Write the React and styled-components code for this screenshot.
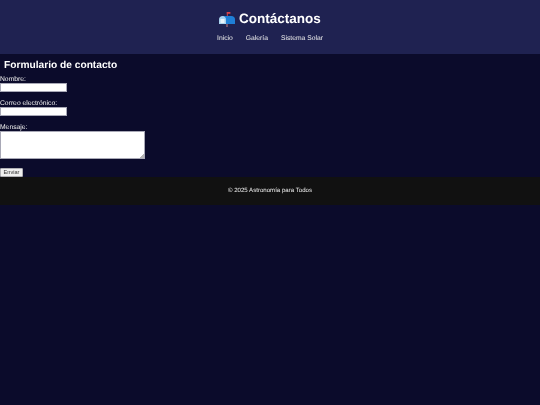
import React from 'react';
import styled, { createGlobalStyle } from 'styled-components';

const GlobalStyle = createGlobalStyle`
  html, body {
    margin: 0;
    padding: 0;
    min-height: 405px;
    background: #0b0b2b;
    color: #fff;
    font-family: "Liberation Sans", Arial, sans-serif;
    text-rendering: geometricPrecision;
  }
  #root {
    will-change: transform;
  }
`;

const Header = styled.header`
  height: 54px;
  box-sizing: border-box;
  padding-top: 9px;
  background: #1f2251;
  text-align: center;
`;

const Title = styled.h1`
  margin: 0;
  display: flex;
  justify-content: center;
  align-items: center;
  gap: 4px;
  font-size: 13.5px;
  line-height: 20px;
  font-weight: 700;
`;

const Nav = styled.nav`
  margin-top: 4px;
  display: flex;
  justify-content: center;
  gap: 13px;
`;

const NavLink = styled.a`
  color: #eee;
  font-size: 6.75px;
  line-height: 11px;
  text-decoration: none;
`;

const Main = styled.main`
  height: 123px;
  box-sizing: border-box;
  padding-top: 5px;
`;

const Heading = styled.h2`
  margin: 0 0 1px;
  padding-left: 4px;
  font-size: 10.2px;
  line-height: 14px;
  font-weight: 700;
`;

const Form = styled.form`
  display: flex;
  flex-direction: column;
  align-items: flex-start;
`;

const Label = styled.label`
  height: 9px;
  color: #eee;
  font-size: 6.75px;
  line-height: 11px;
`;

const Input = styled.input`
  display: block;
  width: 67px;
  height: 9px;
  box-sizing: border-box;
  margin-bottom: 6px;
  padding: 0;
  border: 1px solid #a8a8b6;
  background: #fff;
`;

const TextArea = styled.textarea`
  display: block;
  width: 145px;
  height: 28px;
  box-sizing: border-box;
  margin-bottom: 9px;
  padding: 0;
  border: 1px solid #a8a8b6;
  resize: none;
  background: linear-gradient(135deg, transparent 50%, #b5b5b5 50%) no-repeat right bottom / 4px 4px #fff;
`;

const Submit = styled.button`
  width: 23px;
  height: 9px;
  box-sizing: border-box;
  padding: 0;
  border: 1px solid #b0b0b4;
  border-radius: 1px;
  background: #efefef;
  color: #333;
  font-family: inherit;
  font-size: 5.6px;
  line-height: 7px;
`;

const Footer = styled.footer`
  height: 28px;
  background: #111;
  color: #eee;
  font-size: 6.1px;
  line-height: 27px;
  text-align: center;
`;

const MailboxIcon = () => (
  <svg width="16" height="15" viewBox="0 0 16 15" aria-hidden="true">
    <rect x="7.2" y="11" width="1.6" height="4" fill="#8a5a6a" />
    <rect x="7.8" y="0" width="1.1" height="6" fill="#c8404a" />
    <rect x="7.8" y="0" width="3.6" height="1.8" fill="#d8434a" />
    <path d="M4 4h8.5c2 0 3.5 1.5 3.5 3.5V12H4z" fill="#1f7fd6" />
    <path d="M0 7.5C0 5.5 1.6 4 3.5 4S7 5.5 7 7.5V12H0z" fill="#a9d3ef" />
    <rect x="1.5" y="7" width="4" height="4" fill="#e8f3fb" />
  </svg>
);

const App = () => (
  <>
    <GlobalStyle />
    <Header>
      <Title>
        <MailboxIcon />
        Contáctanos
      </Title>
      <Nav>
        <NavLink href="#">Inicio</NavLink>
        <NavLink href="#">Galería</NavLink>
        <NavLink href="#">Sistema Solar</NavLink>
      </Nav>
    </Header>
    <Main>
      <Heading>Formulario de contacto</Heading>
      <Form>
        <Label>Nombre:</Label>
        <Input type="text" />
        <Label>Correo electrónico:</Label>
        <Input type="email" />
        <Label>Mensaje:</Label>
        <TextArea />
        <Submit type="button">Enviar</Submit>
      </Form>
    </Main>
    <Footer>© 2025 Astronomía para Todos</Footer>
  </>
);

export default App;
